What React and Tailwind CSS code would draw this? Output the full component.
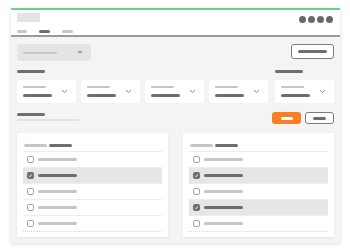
import { ChevronDown } from 'lucide-react';

function Bar({ w, dark = false, thick = false }) {
  return (
    <div
      className={`${thick ? 'h-[3px]' : 'h-[2px]'} rounded-full ${dark ? 'bg-[#6b6e72]' : 'bg-[#c4c5c7]'}`}
      style={{ width: w }}
    />
  );
}

function FilterCard() {
  return (
    <div className="w-[59px] h-[23px] bg-white flex items-center justify-between pl-[6px] pr-[7px]">
      <div className="flex flex-col gap-[6px]">
        <Bar w={23} />
        <Bar w={29} dark thick />
      </div>
      <ChevronDown size={9} strokeWidth={2.5} className="text-[#7b7e82]" />
    </div>
  );
}

function Check({ on }) {
  return on ? (
    <div className="w-[7px] h-[7px] rounded-[2px] bg-[#6b6e72] flex items-center justify-center">
      <svg width="5" height="5" viewBox="0 0 10 10">
        <path d="M2 5.5l2 2 4-5" fill="none" stroke="white" strokeWidth="1.6" />
      </svg>
    </div>
  ) : (
    <div className="w-[7px] h-[7px] rounded-[2px] border border-[#a4a6a9] bg-white" />
  );
}

function Panel({ checked }) {
  return (
    <div className="flex-1 bg-white shadow-[0_1px_2px_rgba(0,0,0,0.08)] px-[6px] pt-[6px]">
      <div className="flex items-center gap-[2px] h-[12px] pl-[1px]">
        <Bar w={23} thick />
        <Bar w={23} dark thick />
      </div>
      <div className="border-t border-[#ececec]">
        {[0, 1, 2, 3, 4].map((i) => (
          <div
            key={i}
            className={`h-[16px] flex items-center gap-[4px] pl-[4px] border-b ${i === 4 ? 'border-dotted border-[#d8d8d8]' : 'border-[#ededed]'} ${checked.includes(i) ? 'bg-[#e6e6e7]' : ''}`}
          >
            <Check on={checked.includes(i)} />
            <Bar w={39} dark={checked.includes(i)} thick />
          </div>
        ))}
      </div>
    </div>
  );
}

export default function App() {
  return (
    <div className="w-[350px] h-[250px] bg-white pt-[8px] pl-[11px]" style={{ fontFamily: '"Liberation Sans", sans-serif' }}>
      <div className="w-[329px] h-[235px] flex flex-col border-t-2 border-[#72d07f] shadow-[0_1px_4px_rgba(0,0,0,0.15)] overflow-hidden">
        {/* header */}
        <div className="h-[27px] bg-white border-b-2 border-[#9a9a9a] px-[6px] flex flex-col">
          <div className="flex justify-between items-start pt-[3px]">
            <div className="w-[23px] h-[9px] bg-[#e4e4e4]" />
            <div className="flex gap-[2px] pt-[3px] pr-[1px]">
              {[0, 1, 2, 3].map((i) => (
                <div key={i} className="w-[7px] h-[7px] rounded-full bg-[#68696b]" />
              ))}
            </div>
          </div>
          <div className="flex gap-[12px] mt-auto mb-[2px]">
            <Bar w={10} thick />
            <Bar w={11} dark thick />
            <Bar w={11} thick />
          </div>
        </div>

        {/* body */}
        <div className="flex-1 bg-[#f5f4f2] px-[6px] pt-[7px] flex flex-col">
          <div className="flex justify-between items-start">
            <div className="w-[74px] h-[17px] rounded-[4px] bg-[#e4e4e5] flex items-center justify-between pl-[6px] pr-[8px]">
              <Bar w={34} />
              <div className="w-0 h-0 border-l-[3px] border-r-[3px] border-t-[3px] border-l-transparent border-r-transparent border-t-[#9b9c9e]" />
            </div>
            <div className="w-[43px] h-[15px] rounded-[3px] border border-[#7a7c80] bg-white flex items-center justify-center">
              <Bar w={29} dark thick />
            </div>
          </div>

          <div className="flex mt-[9px]">
            <Bar w={28} dark thick />
            <div className="ml-auto w-[59px]">
              <Bar w={28} dark thick />
            </div>
          </div>

          <div className="flex mt-[7px]">
            <div className="flex gap-[5px]">
              <FilterCard />
              <FilterCard />
              <FilterCard />
              <FilterCard />
            </div>
            <div className="ml-auto">
              <FilterCard />
            </div>
          </div>

          <div className="flex justify-between mt-[9px]">
            <div className="flex flex-col gap-[3px] pt-[1px]">
              <Bar w={28} dark thick />
              <div className="w-[62px] h-[2px] bg-[#dfe3e8]" />
            </div>
            <div className="flex gap-[4px]">
              <div className="w-[29px] h-[12px] rounded-[3px] bg-[#f87f22] flex items-center justify-center">
                <div className="w-[12px] h-[3px] bg-white rounded-full" />
              </div>
              <div className="w-[29px] h-[12px] rounded-[3px] border border-[#7a7c80] bg-white flex items-center justify-center">
                <div className="w-[13px] h-[3px] bg-[#6b6e72] rounded-full" />
              </div>
            </div>
          </div>

          <div className="flex gap-[15px] mt-[9px] h-[104px]">
            <Panel checked={[1]} />
            <Panel checked={[1, 3]} />
          </div>
        </div>
      </div>
    </div>
  );
}
